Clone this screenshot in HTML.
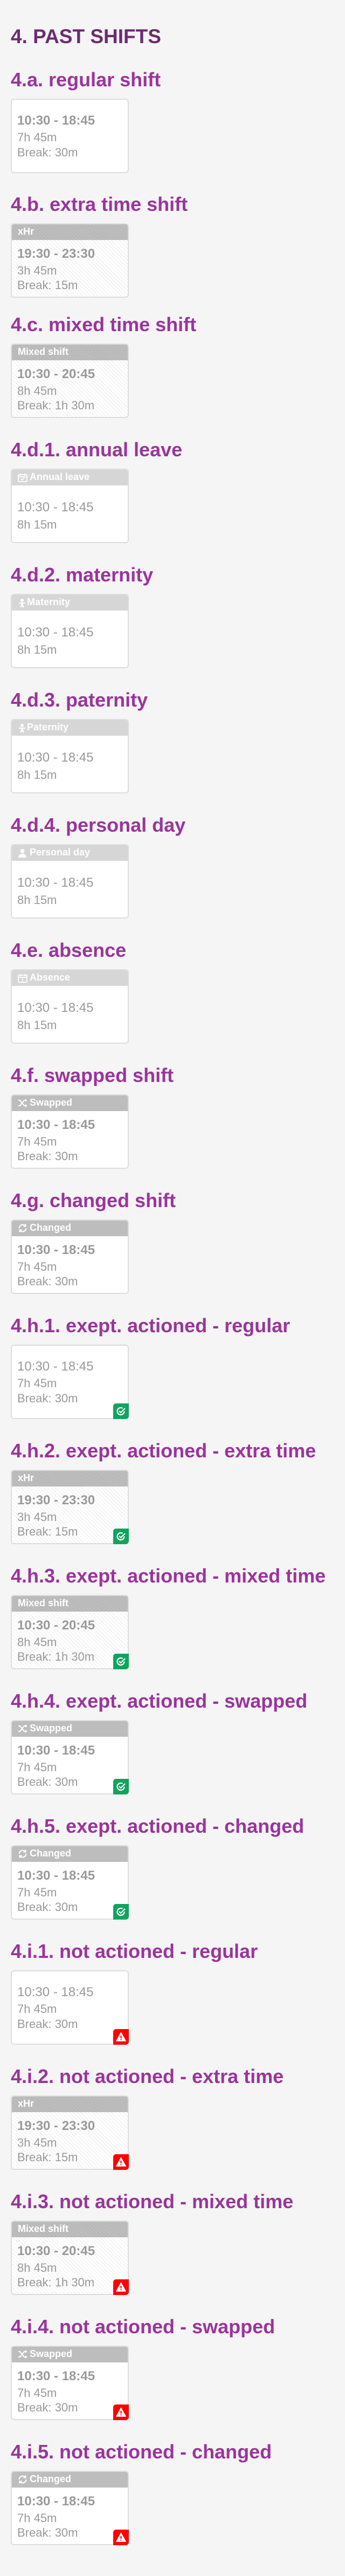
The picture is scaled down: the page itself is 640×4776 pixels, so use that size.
<!DOCTYPE html>
<html><head><meta charset="utf-8"><style>
*{margin:0;padding:0;box-sizing:border-box}
html,body{width:640px;height:4776px;background:#f5f5f5;overflow:hidden}
body{position:relative;font-family:"Liberation Sans",sans-serif}
.t{position:absolute;left:20px;top:46px;font-size:37px;line-height:44px;font-weight:bold;color:#6b2c6f;white-space:nowrap}
h2{position:absolute;left:20px;font-size:36px;line-height:40px;font-weight:bold;color:#9a349c;white-space:nowrap}
.c{position:absolute;left:20px;width:219px;height:138px;background:#fff;border:2px solid #ddd;border-radius:6px;overflow:visible}
.s{background:#fff repeating-linear-gradient(45deg,#fff 0 4px,#ececec 4px 5px)}
.hd{position:absolute;left:0;top:0;width:215px;height:29px;background:#bdbdbd;border-radius:4px 4px 0 0;color:#fff;font-weight:bold;font-size:18px;line-height:18px}
.hd.s2{background:#bdbdbd repeating-linear-gradient(45deg,#bdbdbd 0 4px,#b3b3b3 4px 5px)}
.hd.l{background:#d6d6d6}
.hd span{position:absolute;top:4px;left:11px}
.hd svg{position:absolute;left:11px;top:6px}
.tm,.ln{position:absolute;left:10px;color:#9a9a9a;white-space:nowrap}
.tm{font-size:24px;line-height:24px}
.b{font-weight:bold}
.ln{font-size:22px;line-height:22px}
.bd{position:absolute;right:-2px;bottom:-2px;width:29px;height:29px;border-radius:5px 0 6px 0}
.g{background:#12a35f}.r{background:#ff0000}
.bd svg{position:absolute;left:5px;top:5px}
</style></head><body>
<div class="t">4. PAST SHIFTS</div>

<h2 style="top:128px">4.a. regular shift</h2>
<div class="c" style="top:183px"><div class="tm b" style="top:27px">10:30 - 18:45</div><div class="ln" style="top:59px">7h 45m</div><div class="ln" style="top:87px">Break: 30m</div></div>

<h2 style="top:359px">4.b. extra time shift</h2>
<div class="c s" style="top:414px"><div class="hd s2"><span>xHr</span></div><div class="tm b" style="top:43px">19:30 - 23:30</div><div class="ln" style="top:75px">3h 45m</div><div class="ln" style="top:102px">Break: 15m</div></div>

<h2 style="top:582px">4.c. mixed time shift</h2>
<div class="c s" style="top:637px"><div class="hd s2"><span>Mixed shift</span></div><div class="tm b" style="top:43px">10:30 - 20:45</div><div class="ln" style="top:75px">8h 45m</div><div class="ln" style="top:102px">Break: 1h 30m</div></div>

<h2 style="top:814px">4.d.1. annual leave</h2>
<div class="c" style="top:869px"><div class="hd l"><svg width="18" height="17" viewBox="0 0 18 17" fill="none" stroke="#fff" stroke-width="1.8"><rect x="1" y="3" width="16" height="13" rx="1.5"/><path d="M5 1v4M13 1v4M1 7h16M6 11l2 2 4-4"/></svg><span style="left:33px">Annual leave</span></div><div class="tm" style="top:58px">10:30 - 18:45</div><div class="ln" style="top:91px">8h 15m</div></div>

<h2 style="top:1046px">4.d.2. maternity</h2>
<div class="c" style="top:1101px"><div class="hd l"><svg width="16" height="18" viewBox="0 0 16 18" fill="#fff"><circle cx="8" cy="4" r="3"/><path d="M2 8h12v2H10v3l2 4H9l-1-3-1 3H4l2-4v-3H2z"/></svg><span style="left:28px">Maternity</span></div><div class="tm" style="top:58px">10:30 - 18:45</div><div class="ln" style="top:91px">8h 15m</div></div>

<h2 style="top:1278px">4.d.3. paternity</h2>
<div class="c" style="top:1333px"><div class="hd l"><svg width="16" height="18" viewBox="0 0 16 18" fill="#fff"><circle cx="8" cy="4" r="3"/><path d="M2 8h12v2H10v3l2 4H9l-1-3-1 3H4l2-4v-3H2z"/></svg><span style="left:28px">Paternity</span></div><div class="tm" style="top:58px">10:30 - 18:45</div><div class="ln" style="top:91px">8h 15m</div></div>

<h2 style="top:1510px">4.d.4. personal day</h2>
<div class="c" style="top:1565px"><div class="hd l"><svg width="17" height="17" viewBox="0 0 17 17" fill="#fff"><circle cx="8.5" cy="5" r="4"/><path d="M1 17c0-5 3-7 7.5-7S16 12 16 17z"/></svg><span style="left:33px">Personal day</span></div><div class="tm" style="top:58px">10:30 - 18:45</div><div class="ln" style="top:91px">8h 15m</div></div>

<h2 style="top:1742px">4.e. absence</h2>
<div class="c" style="top:1797px"><div class="hd l"><svg width="18" height="17" viewBox="0 0 18 17" fill="none" stroke="#fff" stroke-width="1.8"><rect x="1" y="3" width="16" height="13" rx="1.5"/><path d="M5 1v4M13 1v4M1 7h16M9 9v3M9 13.5v1.5"/></svg><span style="left:33px">Absence</span></div><div class="tm" style="top:58px">10:30 - 18:45</div><div class="ln" style="top:91px">8h 15m</div></div>

<h2 style="top:1974px">4.f. swapped shift</h2>
<div class="c" style="top:2029px"><div class="hd"><svg width="18" height="16" viewBox="0 0 18 16" fill="none" stroke="#fff" stroke-width="2"><path d="M1 3h3l8 10h4M1 13h3l8-10h4M14 1l2 2-2 2M14 11l2 2-2 2"/></svg><span style="left:33px">Swapped</span></div><div class="tm b" style="top:43px">10:30 - 18:45</div><div class="ln" style="top:75px">7h 45m</div><div class="ln" style="top:102px">Break: 30m</div></div>

<h2 style="top:2206px">4.g. changed shift</h2>
<div class="c" style="top:2261px"><div class="hd"><svg width="18" height="16" viewBox="0 0 18 16" fill="none" stroke="#fff" stroke-width="2.2"><path d="M2.5 8a6.5 6.5 0 0 1 11.5-4M15.5 8a6.5 6.5 0 0 1-11.5 4"/><path d="M14.5 0.5v4h-4M3.5 15.5v-4h4"/></svg><span style="left:33px">Changed</span></div><div class="tm b" style="top:43px">10:30 - 18:45</div><div class="ln" style="top:75px">7h 45m</div><div class="ln" style="top:102px">Break: 30m</div></div>

<h2 style="top:2438px">4.h.1. exept. actioned - regular</h2>
<div class="c" style="top:2493px"><div class="tm" style="top:27px">10:30 - 18:45</div><div class="ln" style="top:59px">7h 45m</div><div class="ln" style="top:87px">Break: 30m</div><div class="bd g"><svg width="19" height="19" viewBox="0 0 19 19" fill="none" stroke="#fff" stroke-width="2.2"><path d="M15.5 9.5a6.5 6.5 0 1 1-3-5.5"/><path d="M6 9l3 3 8-8"/></svg></div></div>

<h2 style="top:2670px">4.h.2. exept. actioned - extra time</h2>
<div class="c s" style="top:2725px"><div class="hd s2"><span>xHr</span></div><div class="tm b" style="top:43px">19:30 - 23:30</div><div class="ln" style="top:75px">3h 45m</div><div class="ln" style="top:102px">Break: 15m</div><div class="bd g"><svg width="19" height="19" viewBox="0 0 19 19" fill="none" stroke="#fff" stroke-width="2.2"><path d="M15.5 9.5a6.5 6.5 0 1 1-3-5.5"/><path d="M6 9l3 3 8-8"/></svg></div></div>

<h2 style="top:2902px">4.h.3. exept. actioned - mixed time</h2>
<div class="c s" style="top:2957px"><div class="hd s2"><span>Mixed shift</span></div><div class="tm b" style="top:43px">10:30 - 20:45</div><div class="ln" style="top:75px">8h 45m</div><div class="ln" style="top:102px">Break: 1h 30m</div><div class="bd g"><svg width="19" height="19" viewBox="0 0 19 19" fill="none" stroke="#fff" stroke-width="2.2"><path d="M15.5 9.5a6.5 6.5 0 1 1-3-5.5"/><path d="M6 9l3 3 8-8"/></svg></div></div>

<h2 style="top:3134px">4.h.4. exept. actioned - swapped</h2>
<div class="c" style="top:3189px"><div class="hd"><svg width="18" height="16" viewBox="0 0 18 16" fill="none" stroke="#fff" stroke-width="2"><path d="M1 3h3l8 10h4M1 13h3l8-10h4M14 1l2 2-2 2M14 11l2 2-2 2"/></svg><span style="left:33px">Swapped</span></div><div class="tm b" style="top:43px">10:30 - 18:45</div><div class="ln" style="top:75px">7h 45m</div><div class="ln" style="top:102px">Break: 30m</div><div class="bd g"><svg width="19" height="19" viewBox="0 0 19 19" fill="none" stroke="#fff" stroke-width="2.2"><path d="M15.5 9.5a6.5 6.5 0 1 1-3-5.5"/><path d="M6 9l3 3 8-8"/></svg></div></div>

<h2 style="top:3366px">4.h.5. exept. actioned - changed</h2>
<div class="c" style="top:3421px"><div class="hd"><svg width="18" height="16" viewBox="0 0 18 16" fill="none" stroke="#fff" stroke-width="2.2"><path d="M2.5 8a6.5 6.5 0 0 1 11.5-4M15.5 8a6.5 6.5 0 0 1-11.5 4"/><path d="M14.5 0.5v4h-4M3.5 15.5v-4h4"/></svg><span style="left:33px">Changed</span></div><div class="tm b" style="top:43px">10:30 - 18:45</div><div class="ln" style="top:75px">7h 45m</div><div class="ln" style="top:102px">Break: 30m</div><div class="bd g"><svg width="19" height="19" viewBox="0 0 19 19" fill="none" stroke="#fff" stroke-width="2.2"><path d="M15.5 9.5a6.5 6.5 0 1 1-3-5.5"/><path d="M6 9l3 3 8-8"/></svg></div></div>

<h2 style="top:3598px">4.i.1. not actioned - regular</h2>
<div class="c" style="top:3653px"><div class="tm" style="top:27px">10:30 - 18:45</div><div class="ln" style="top:59px">7h 45m</div><div class="ln" style="top:87px">Break: 30m</div><div class="bd r"><svg width="19" height="19" viewBox="0 0 19 19"><path d="M9.5 1.5L18 17H1z" fill="#fff" stroke="#fff" stroke-linejoin="round" stroke-width="1.5"/><path d="M9.5 7v5M9.5 13.5v1.8" stroke="#f00" stroke-width="2.2"/></svg></div></div>

<h2 style="top:3830px">4.i.2. not actioned - extra time</h2>
<div class="c s" style="top:3885px"><div class="hd s2"><span>xHr</span></div><div class="tm b" style="top:43px">19:30 - 23:30</div><div class="ln" style="top:75px">3h 45m</div><div class="ln" style="top:102px">Break: 15m</div><div class="bd r"><svg width="19" height="19" viewBox="0 0 19 19"><path d="M9.5 1.5L18 17H1z" fill="#fff" stroke="#fff" stroke-linejoin="round" stroke-width="1.5"/><path d="M9.5 7v5M9.5 13.5v1.8" stroke="#f00" stroke-width="2.2"/></svg></div></div>

<h2 style="top:4062px">4.i.3. not actioned - mixed time</h2>
<div class="c s" style="top:4117px"><div class="hd s2"><span>Mixed shift</span></div><div class="tm b" style="top:43px">10:30 - 20:45</div><div class="ln" style="top:75px">8h 45m</div><div class="ln" style="top:102px">Break: 1h 30m</div><div class="bd r"><svg width="19" height="19" viewBox="0 0 19 19"><path d="M9.5 1.5L18 17H1z" fill="#fff" stroke="#fff" stroke-linejoin="round" stroke-width="1.5"/><path d="M9.5 7v5M9.5 13.5v1.8" stroke="#f00" stroke-width="2.2"/></svg></div></div>

<h2 style="top:4294px">4.i.4. not actioned - swapped</h2>
<div class="c" style="top:4349px"><div class="hd"><svg width="18" height="16" viewBox="0 0 18 16" fill="none" stroke="#fff" stroke-width="2"><path d="M1 3h3l8 10h4M1 13h3l8-10h4M14 1l2 2-2 2M14 11l2 2-2 2"/></svg><span style="left:33px">Swapped</span></div><div class="tm b" style="top:43px">10:30 - 18:45</div><div class="ln" style="top:75px">7h 45m</div><div class="ln" style="top:102px">Break: 30m</div><div class="bd r"><svg width="19" height="19" viewBox="0 0 19 19"><path d="M9.5 1.5L18 17H1z" fill="#fff" stroke="#fff" stroke-linejoin="round" stroke-width="1.5"/><path d="M9.5 7v5M9.5 13.5v1.8" stroke="#f00" stroke-width="2.2"/></svg></div></div>

<h2 style="top:4526px">4.i.5. not actioned - changed</h2>
<div class="c" style="top:4581px"><div class="hd"><svg width="18" height="16" viewBox="0 0 18 16" fill="none" stroke="#fff" stroke-width="2.2"><path d="M2.5 8a6.5 6.5 0 0 1 11.5-4M15.5 8a6.5 6.5 0 0 1-11.5 4"/><path d="M14.5 0.5v4h-4M3.5 15.5v-4h4"/></svg><span style="left:33px">Changed</span></div><div class="tm b" style="top:43px">10:30 - 18:45</div><div class="ln" style="top:75px">7h 45m</div><div class="ln" style="top:102px">Break: 30m</div><div class="bd r"><svg width="19" height="19" viewBox="0 0 19 19"><path d="M9.5 1.5L18 17H1z" fill="#fff" stroke="#fff" stroke-linejoin="round" stroke-width="1.5"/><path d="M9.5 7v5M9.5 13.5v1.8" stroke="#f00" stroke-width="2.2"/></svg></div></div>
</body></html>
